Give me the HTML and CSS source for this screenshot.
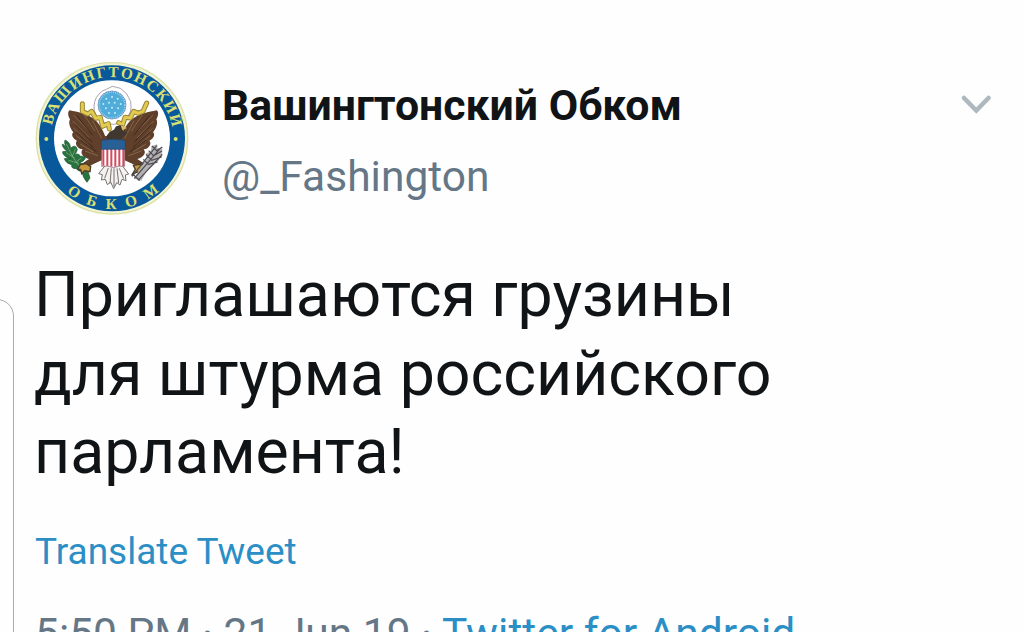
FILE: index.html
```html
<!DOCTYPE html>
<html lang="ru">
<head>
<meta charset="utf-8">
<title>Вашингтонский Обком</title>
<link rel="stylesheet" href="styles.css">
</head>
<body>
<div class="edge"></div>
<article class="tweet">
  <header class="head">
    <svg class="avatar" viewBox="0 0 492 492" aria-hidden="true">
      <defs>
        <path id="arc-top" d="M62 247A184 184 0 0 1 430 247"/>
        <path id="arc-bottom" d="M34 247A212 212 0 0 0 458 247"/>
        <g id="wing">
          <path fill="#60402b" d="M119 163C143 168 171 173 189 187C211 202 222 230 230 253L238 306C214 311 187 325 161 341C144 347 139 336 151 326L177 309C158 304 149 291 158 280C141 278 133 262 141 254C127 248 123 235 130 229C118 214 115 199 120 190C114 181 112 167 119 163Z"/>
          <path fill="none" stroke="#8b6c4e" stroke-width="2.5" d="M130 177L177 225M128 195L178 246M132 217L178 263M139 239L182 275M151 264L190 288M165 285L204 299M163 178L195 225M187 194L215 247"/>
          <path fill="none" stroke="#3d281f" stroke-width="3" d="M140 178L188 238M135 205L187 259M139 228L190 274M151 252L200 288"/>
        </g>
      </defs>
      <circle cx="246" cy="247" r="227" fill="#f1f5d4" stroke="#dce0a4" stroke-width="4"/>
      <circle cx="246" cy="247" r="219" fill="#07599c"/>
      <circle cx="246" cy="247" r="174" fill="#fff"/>
      <g class="seal-text">
        <text textLength="506"><textPath href="#arc-top" startOffset="50.5%" text-anchor="middle" textLength="506">ВАШИНГТОНСКИЙ</textPath></text>
        <text textLength="303"><textPath href="#arc-bottom" startOffset="50.5%" text-anchor="middle" textLength="303">ОБКОМ</textPath></text>
      </g>
      <circle cx="49" cy="249" r="6" fill="#d9df72"/>
      <circle cx="437" cy="249" r="6" fill="#d9df72"/>
      <path fill="#fff" stroke="#aaa2ae" stroke-width="3" d="M247 91l13 3 11 3 10 8 9 9 6 11 6 12 1 14-1 14-6 12-9 10-9 9-12 5-13 4-13-1-13-2-12-7-9-8-8-11-5-12-1-14 2-13 5-12 8-11 10-9 12-5z"/>
      <circle cx="246" cy="147" r="42" fill="#50acd9" stroke="#66719d" stroke-width="2"/>
      <circle cx="246" cy="147" r="39" fill="none" stroke="#9bd4ef" stroke-width="5" stroke-dasharray="3 3"/>
      <g fill="#c8ebf5">
        <circle cx="229" cy="128" r="3"/><circle cx="246" cy="123" r="3"/><circle cx="263" cy="128" r="3"/>
        <circle cx="220" cy="144" r="3"/><circle cx="237" cy="140" r="3"/><circle cx="254" cy="140" r="3"/><circle cx="272" cy="144" r="3"/>
        <circle cx="228" cy="157" r="3"/><circle cx="246" cy="155" r="3"/><circle cx="264" cy="157" r="3"/>
        <circle cx="237" cy="171" r="3"/><circle cx="255" cy="171" r="3"/>
      </g>
      <path fill="#f4f1ee" stroke="#777273" stroke-width="3" d="M226 328L206 353L217 356L214 372L226 370L232 386L242 378L251 398L260 380L270 387L276 370L288 374L286 357L296 354L276 328Z"/>
      <path fill="none" stroke="#777273" stroke-width="3" d="M235 336L224 367M244 337L240 383M252 337V392M261 337L266 382M268 337L281 368"/>
      <use href="#wing"/>
      <use href="#wing" transform="translate(499 0) scale(-1 1)"/>
      <path fill="#60402b" d="M218 262L226 240H274L284 262V300L250 334L216 300Z"/>
      <g fill="none" stroke-linecap="round" stroke-linejoin="round">
        <path stroke="#9a8433" stroke-width="15" d="M157 143V166L173 174L185 166L197 187L211 184L218 211L235 203L238 219M350 141L339 166L324 172L311 166L301 186L285 184L278 207L266 200"/>
        <path stroke="#e2cb51" stroke-width="9" d="M157 143V166L173 174L185 166L197 187L211 184L218 211L235 203L238 219M350 141L339 166L324 172L311 166L301 186L285 184L278 207L266 200"/>
      </g>
      <path fill="#40382f" d="M230 239L239 227L252 221L258 211L276 207L287 218L279 223L292 231L280 243L270 252H231Z"/>
      <path fill="#dfc06b" d="M272 207L291 216L277 223Z"/>
      <path fill="#fff" stroke="#775d68" stroke-width="2" d="M215 276H284V331Q266 328 250 335Q234 328 215 331Z"/>
      <path stroke="#d34d60" stroke-width="6" d="M220 279V329M232 279V330M244 279V332M256 279V332M268 279V330M280 279V330"/>
      <path fill="#286096" stroke="#24466f" stroke-width="2" d="M214 253Q248 247 285 253V280H214Z"/>
      <g fill="#287340" stroke="#185631" stroke-width="2">
        <path d="M105 252Q122 259 121 277Q138 262 142 281Q140 292 131 296Q147 290 151 301Q166 299 166 307Q160 318 149 320Q168 325 172 337Q175 350 180 366L171 379Q158 365 156 346Q145 347 139 338Q120 337 126 326Q108 323 103 308Q118 305 122 309Q96 299 98 287Q109 283 116 291Q94 272 97 264Q105 268 109 273Q101 261 105 252Z"/>
        <path fill="none" stroke="#91b584" stroke-width="2" d="M109 264L129 304L163 351M108 289L134 306M116 313L146 322M137 278L127 300M154 306L139 317"/>
      </g>
      <path fill="#c49a3d" stroke="#493a2b" stroke-width="4" d="M151 326L169 323L182 332L180 347L164 344L155 353L152 341L143 339ZM310 328L330 325L351 327L346 340L334 338L335 349L320 348L305 358L316 340Z"/>
      <path fill="#b4b1b3" d="M322 350L350 308L348 293L362 286L365 270L382 265L382 277L397 277L396 300L382 318L350 346L334 374L312 368Z"/>
      <g fill="none" stroke="#4d4a52" stroke-width="3.5">
        <path d="M306 361L380 269M313 367L390 278M324 373L397 295M308 354L329 374M348 295L365 313L395 303M356 284L371 299L396 285M366 270L380 284L397 273M340 310L355 325L383 318"/>
      </g>
    </svg>
    <div class="author">
      <span class="name">Вашингтонский Обком</span>
      <span class="handle">@_Fashington</span>
    </div>
    <svg class="chevron" viewBox="0 0 32 22" aria-hidden="true"><path d="M4 4L16.3 16.5L28.5 4"/></svg>
  </header>
  <p class="message">Приглашаются грузины<br>для штурма российского<br>парламента!</p>
  <a class="translate">Translate Tweet</a>
  <div class="meta"><span>5:50 PM · 21 Jun 19 · </span><a class="source">Twitter for Android</a></div>
</article>
</body>
</html>
```

FILE: styles.css
```css
* { box-sizing: border-box; }
html, body { margin: 0; height: 632px; overflow: hidden; }
body { position: relative; background: #fefefe; font-family: Roboto, sans-serif; color: #101416; }
.edge { position: absolute; left: -20px; top: 299px; width: 34px; height: 360px; border: 1.5px solid #aaa; border-radius: 18px; }
.tweet { display: flex; flex-direction: column; padding: 56px 34px 0 35px; white-space: nowrap; }
.head { display: flex; align-items: flex-start; height: 164px; }
.avatar { flex: none; width: 164px; height: 164px; margin-left: -5.5px; }
.seal-text { font-family: "Liberation Serif", serif; font-weight: bold; font-size: 46px; fill: #d9df72; }
.author { display: flex; flex-direction: column; flex: 1; padding: 24px 0 0 28.5px; }
.name { font-size: 42.75px; line-height: 50px; font-weight: 700; }
.handle { margin-top: 22px; font-size: 42.5px; line-height: 50px; color: #657786; }
.chevron { flex: none; width: 32px; height: 22px; margin: 38px -1.5px 0 0; }
.chevron path { fill: none; stroke: #aeb9bf; stroke-width: 4.6; stroke-linecap: round; }
.message { margin: 36px 0 0 -1px; font-size: 62.6px; line-height: 78.7px; }
.translate { margin-top: 38px; font-size: 37px; line-height: 44px; color: #2b8fc6; }
.meta { margin-top: 35px; font-size: 42.5px; line-height: 50px; color: #657786; }
.source { color: #2b8fc6; }
```
